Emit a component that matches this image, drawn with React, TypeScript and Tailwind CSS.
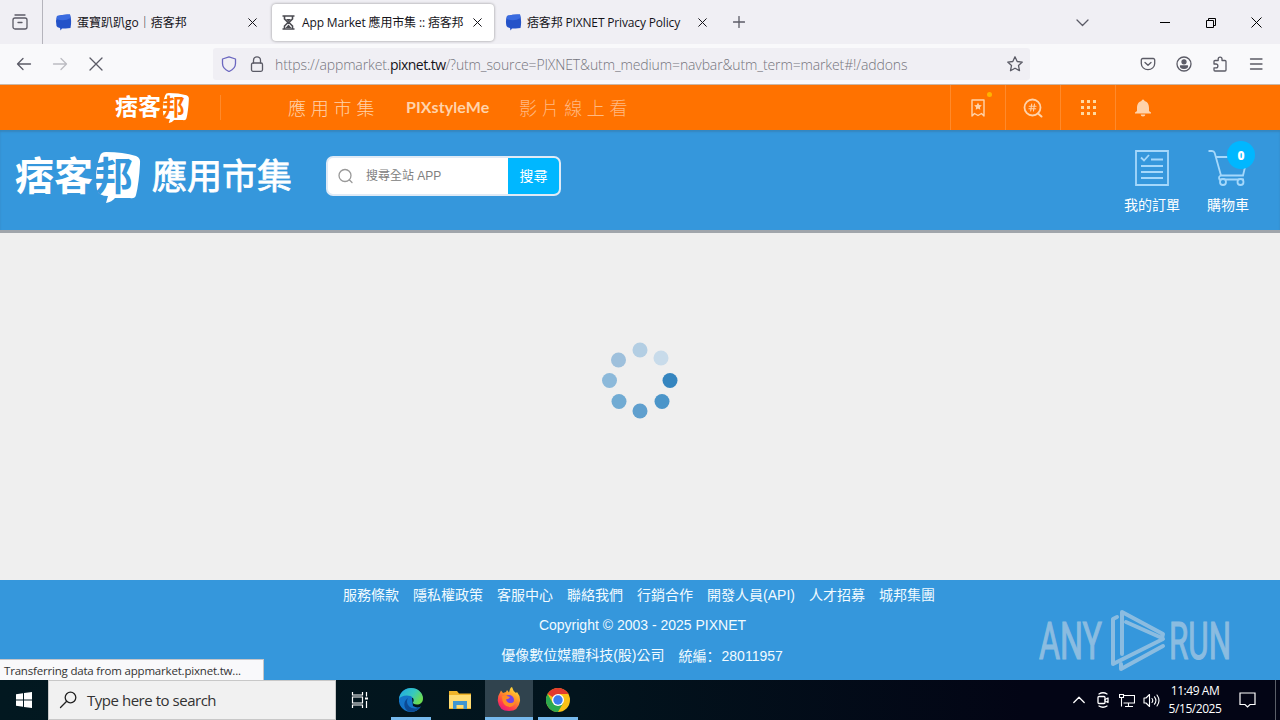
import React from "react";

const uiFont = "font-['Open_Sans','Noto_Sans_CJK_TC',sans-serif]";
const pageFont = "font-['Liberation_Sans','Noto_Sans_CJK_TC',sans-serif]";

interface IconProps {
  size?: number;
  box?: string;
  className?: string;
  children: React.ReactNode;
}

const Icon: React.FC<IconProps> = ({
  size = 16,
  box = "0 0 16 16",
  className = "",
  children,
}) => (
  <svg
    width={size}
    height={size}
    viewBox={box}
    fill="none"
    stroke="currentColor"
    strokeWidth={1.3}
    strokeLinecap="round"
    strokeLinejoin="round"
    className={`shrink-0 ${className}`}
  >
    {children}
  </svg>
);

const CloseIcon = ({ size = 9 }: { size?: number }) => (
  <Icon size={size} box="0 0 9 9">
    <path d="M.7.7l7.6 7.6M8.3.7L.7 8.3" strokeWidth={1} />
  </Icon>
);

const PixFavicon = () => (
  <svg width="17" height="17" viewBox="0 0 17 17" className="shrink-0">
    <path
      d="M2 2Q9 0 15 .6Q17 7 15.500 14Q10 14.500 7 14.500L5.500 16.500L5 14Q2 13.500 1.500 12Q.2 7 2 2Z"
      fill="#2452c8"
    />
    <path d="M2 2Q9 0 15 .6L15.500 4Q9 8 1.500 5Z" fill="#3a6be0" />
  </svg>
);

interface LogoProps {
  width: number;
  height: number;
  ink: string;
}

// speech bubble logo, the last character is cut out in the bar colour
const PixLogo: React.FC<LogoProps> = ({ width, height, ink }) => (
  <svg
    width={width}
    height={height}
    viewBox="0 0 127 53"
    className="shrink-0 overflow-visible"
  >
    <path
      d="M85 5Q86 1 91 1Q108 1 121 5Q126 7 125 13Q124 32 121 44Q120 48 115 47L100 47Q97 51 91 52L93 45Q84 45 82 39Q79 20 85 5Z"
      fill="#fff"
    />
    <g
      fontFamily="'Noto Sans CJK TC', sans-serif"
      fontWeight="700"
      fontSize="39"
    >
      <text x="0" y="39" fill="#fff">
        痞客
      </text>
      <text x="79" y="39" fill={ink}>
        邦
      </text>
    </g>
  </svg>
);

const TabBar = () => (
  <div
    className={`flex h-11 items-center bg-[#f0eff4] text-[12px] text-[#15141a] ${uiFont}`}
  >
    <div className="flex h-full w-[43px] items-center border-r border-[#b5b4bc] pl-3 text-[#5b5b66]">
      <Icon>
        <path d="M3 1h10" />
        <rect x="1" y="4" width="14" height="11" rx="2" />
        <path d="M6 8.500h4" />
      </Icon>
    </div>
    <div className="flex w-[229px] items-center pl-[12px] pr-[15px]">
      <PixFavicon />
      <span className="ml-[5px] flex-1 whitespace-nowrap pt-[2px]">
        蛋寶趴趴go｜痞客邦
      </span>
      <CloseIcon />
    </div>
    <div className="flex h-[37px] w-[222px] items-center rounded-[4px] bg-white pl-[10px] pr-[12px] shadow-[0_0_3px_rgba(0,0,0,0.4)]">
      <svg width="13" height="15" viewBox="0 0 13 15" className="shrink-0">
        <path
          d="M.5 1h12M.5 14h12M2.500 1v3L6 7.500L2.500 11v3M10.500 1v3L7 7.500L10.500 11v3"
          stroke="#4a4a50"
          strokeWidth="1.600"
          fill="none"
        />
        <path d="M4 4h5L6.500 7ZM3.500 13L6.500 9.500L9.500 13Z" fill="#4a4a50" />
      </svg>
      <span className="ml-[7px] flex-1 whitespace-nowrap pt-[2px] tracking-[-0.150px]">
        App Market 應用市集 :: 痞客邦
      </span>
      <CloseIcon />
    </div>
    <div className="flex w-[213px] items-center pl-[11px]">
      <PixFavicon />
      <span className="ml-[5px] flex-1 whitespace-nowrap pt-[2px] tracking-[-0.160px]">
        痞客邦 PIXNET Privacy Policy
      </span>
      <CloseIcon />
    </div>
    <div className="ml-[26px] text-[#5b5b66]">
      <Icon size={12} box="0 0 12 12">
        <path d="M6 .5v11M.5 6h11" />
      </Icon>
    </div>
    <div className="ml-auto flex items-center pr-[18px]">
      <Icon size={13} box="0 0 13 13" className="mr-[71px] text-[#5b5b66]">
        <path d="M1 4l5.500 5.500L12 4" />
      </Icon>
      <div className="mr-[36px] h-px w-[10px] bg-black" />
      <svg
        width="11"
        height="11"
        viewBox="0 0 11 11"
        fill="none"
        stroke="#000"
        className="mr-[34px]"
      >
        <path d="M.5 3.500h7v7h-7zM2.500 3.500v-2h7v7h-2" />
      </svg>
      <svg width="11" height="11" viewBox="0 0 11 11" stroke="#000">
        <path d="M.5.5l10 10M10.500.5l-10 10" />
      </svg>
    </div>
  </div>
);

const NavBar = () => (
  <div
    className={`flex h-[41px] items-center border-b border-[#c9b8a8] bg-[#f9f9fb] text-[#5b5b66] ${uiFont}`}
  >
    <div className="flex w-[213px] pl-[6px]">
      <div className="flex w-9 justify-center">
        <Icon>
          <path d="M14.500 8H1.500M7 2.500L1.500 8L7 13.500" />
        </Icon>
      </div>
      <div className="flex w-9 justify-center text-[#bcbcc2]">
        <Icon>
          <path d="M1.500 8h13M9 2.500l5.500 5.500L9 13.500" />
        </Icon>
      </div>
      <div className="flex w-9 justify-center">
        <Icon>
          <path d="M2 2l12 12M14 2L2 14" />
        </Icon>
      </div>
    </div>
    <div className="flex h-8 w-[817px] items-center rounded-[3px] bg-[#f0eff4] pl-[2px]">
      <div className="flex w-7 justify-center text-[#6b67c0]">
        <Icon>
          <path d="M8 .8L14.500 3v4.500C14.500 11.500 11.500 14 8 15.500C4.500 14 1.500 11.500 1.500 7.500V3Z" />
        </Icon>
      </div>
      <div className="flex w-7 justify-center">
        <Icon>
          <rect x="2.500" y="7" width="11" height="8.300" rx="1.500" />
          <path d="M4.500 7V4.300a3.500 3.500 0 0 1 7 0V7" />
        </Icon>
      </div>
      <div className="ml-1 flex-1 whitespace-nowrap pt-px text-[14px] font-light tracking-[-0.120px] text-[#75757d]">
        https://appmarket.
        <span className="font-normal tracking-[-0.550px] text-[#15141a]">
          pixnet.tw
        </span>
        /?utm_source=PIXNET&amp;utm_medium=navbar&amp;utm_term=market#!/addons
      </div>
      <Icon className="mr-[7px]">
        <path d="M8 .8l2.200 4.700l5.100.6l-3.800 3.500l1 5.100L8 12.200l-4.500 2.500l1-5.100L.7 6.100l5.100-.6Z" />
      </Icon>
    </div>
    <div className="ml-auto flex pr-[6px]">
      <div className="flex w-9 justify-center">
        <Icon>
          <path d="M2.800 2.500h10.400a1.500 1.500 0 0 1 1.500 1.500v3.500a6.700 6.200 0 0 1-13.400 0V4a1.500 1.500 0 0 1 1.500-1.500ZM5 6.500l3 2.800l3-2.800" />
        </Icon>
      </div>
      <div className="flex w-9 justify-center">
        <Icon>
          <circle cx="8" cy="8" r="7" />
          <circle cx="8" cy="5.800" r="2" fill="currentColor" />
          <path d="M4.500 10h7a3.500 2.300 0 0 1-7 0Z" fill="currentColor" />
        </Icon>
      </div>
      <div className="flex w-9 justify-center">
        <Icon>
          <path d="M2 7V5.500a1 1 0 0 1 1-1h3.200V3a1.900 1.900 0 0 1 3.800 0v1.500h3a1 1 0 0 1 1 1V14a1 1 0 0 1-1 1H3a1 1 0 0 1-1-1v-2.200h2a1.900 1.900 0 0 0 0-3.800H2Z" />
        </Icon>
      </div>
      <div className="flex w-9 justify-center">
        <Icon>
          <path d="M2.500 3h11.500M2.500 8h11.500M2.500 13h11.500" />
        </Icon>
      </div>
    </div>
  </div>
);

const cell =
  "flex h-full w-[55px] items-center justify-center border-l border-[#ff8a2b]";

const OrangeBar = () => (
  <div className="flex h-[45px] items-center bg-[#ff7200] pl-[115px] pr-[110px] text-[#ffd3ab]">
    <PixLogo width={75} height={32} ink="#ff7200" />
    <div className="ml-[30px] h-[25px] w-px bg-[#ff8a2b]" />
    <div className="ml-[67px] w-[118px] whitespace-nowrap font-['Noto_Sans_CJK_TC',sans-serif] text-[18px] font-light tracking-[4.800px]">
      應用市集
    </div>
    <div className="w-[113px] whitespace-nowrap pb-px font-['Lato',sans-serif] text-[16px] font-bold tracking-[0.1px]">
      PIXstyleMe
    </div>
    <div className="whitespace-nowrap font-['Noto_Sans_CJK_TC',sans-serif] text-[18px] font-light tracking-[4.600px] text-[#ffb982]">
      影片線上看
    </div>
    <div className="ml-auto flex h-full">
      <div className={`relative ${cell}`}>
        <Icon size={20} box="0 0 20 20">
          <path
            d="M4 2h12v16l-2.500-2.500L10 17.500L6.500 15.500L4 18Z"
            strokeWidth={1.400}
          />
          <path
            d="M10 4.500l1.200 2.400l2.600.4l-1.900 1.900l.4 2.600L10 10.600l-2.300 1.200l.4-2.600L6.200 7.300l2.600-.4Z"
            fill="currentColor"
            stroke="none"
          />
        </Icon>
        <span className="absolute right-[13px] top-[7px] h-[5px] w-[5px] rounded-full bg-[#ffb400]" />
      </div>
      <div className={cell}>
        <Icon size={20} box="0 0 20 20">
          <circle cx="9.500" cy="9.500" r="8" strokeWidth={1.800} />
          <path d="M15 15.500l3.500 3" strokeWidth={2} />
          <path
            d="M8.700 6L7.700 13M11.500 6l-1 7M6.200 8.200h6.800M5.900 10.800h6.800"
            strokeWidth={1.100}
          />
        </Icon>
      </div>
      <div className={cell}>
        <div className="grid grid-cols-3 gap-[3px]">
          {[...Array(9)].map((_, i) => (
            <span key={i} className="h-[3px] w-[3px] bg-[#ffd9a0]" />
          ))}
        </div>
      </div>
      <div className={cell}>
        <Icon size={20} box="0 0 20 20">
          <path
            d="M10 1.500a1.500 1.500 0 0 1 1.500 1.500C15 4 16 7 16 10v3l2 1.500v1H2v-1L4 13v-3c0-3 1-6 4.500-7A1.500 1.500 0 0 1 10 1.500ZM7.700 16.500h4.600a2.300 2 0 0 1-4.600 0Z"
            fill="currentColor"
            stroke="none"
          />
        </Icon>
      </div>
    </div>
  </div>
);

const Header = () => (
  <div
    className={`flex h-[103px] items-start border-b-[3px] border-[#a0a5ab] bg-[#3597dc] pl-[15px] pr-[18px] shadow-[inset_0_2px_2px_#3586be] ${pageFont}`}
  >
    <div className="flex w-[311px] items-center pt-[21px]">
      <PixLogo width={127} height={53} ink="#3597dc" />
      <span className="ml-[10px] mt-[-8px] whitespace-nowrap font-['Noto_Sans_CJK_TC',sans-serif] text-[35px] leading-[48px] text-white [-webkit-text-stroke:0.8px_#fff]">
        應用市集
      </span>
    </div>
    <div className="mt-[26px] flex h-10 w-[235px] overflow-hidden rounded-[7px] border-2 border-[#dfeaf6] bg-white">
      <div className="flex flex-1 items-center pl-[10px] text-[12px] text-[#808080]">
        <Icon size={16} className="mr-[12px] text-[#999]">
          <circle cx="7" cy="7.500" r="6" />
          <path d="M11.500 12l2.500 2.500" />
        </Icon>
        搜尋全站 APP
      </div>
      <div className="flex w-[51px] items-center justify-center bg-[#00b7ff] text-[14px] text-white">
        搜尋
      </div>
    </div>
    <div className="ml-auto flex pt-5 text-[14px] leading-[20px] text-white">
      <div className="flex w-[70px] flex-col items-center">
        <svg
          width="34"
          height="36"
          viewBox="0 0 34 36"
          fill="none"
          stroke="#a5d8fb"
          strokeWidth="1.800"
        >
          <path d="M1 1h32v34H1zM16 9.500h12M6 16h22M6 22h22M6 28h22" />
          <path d="M6 7.500l3 3l5-5.500" />
        </svg>
        <span className="mt-[9px]">我的訂單</span>
      </div>
      <div className="relative ml-[7px] flex w-[68px] flex-col items-center">
        <svg
          width="40"
          height="36"
          viewBox="0 0 40 36"
          fill="none"
          stroke="#a5d8fb"
          strokeWidth="1.800"
        >
          <path d="M.5 1h3.500q2 0 2.700 2L13 25.500h22L38 13M8 7h17M13 25.500q-3 1-1.500 4H36" />
          <circle cx="15" cy="32" r="3" fill="#3597dc" />
          <circle cx="32.500" cy="32" r="3" fill="#3597dc" />
        </svg>
        <span className="mt-[9px]">購物車</span>
        <span className="absolute right-[7px] top-[-9px] flex h-7 w-7 items-center justify-center rounded-full bg-[#00b7ff] pt-[2px] font-['Open_Sans',sans-serif] text-[12px] font-extrabold">
          0
        </span>
      </div>
    </div>
  </div>
);

const dots = [
  { x: 38, y: 8, c: "#b3cee3" },
  { x: 59, y: 16, c: "#c8dbea" },
  { x: 68, y: 38.5, c: "#3585bf" },
  { x: 60, y: 59.5, c: "#4b95c9" },
  { x: 38, y: 69, c: "#5f9fce" },
  { x: 17, y: 59.5, c: "#71abd3" },
  { x: 7.5, y: 38.5, c: "#8cb9da" },
  { x: 16.5, y: 18, c: "#9ec0dc" },
];

const Spinner = () => (
  <svg width="76" height="78" viewBox="0 0 76 78">
    {dots.map((d, i) => (
      <circle key={i} cx={d.x} cy={d.y} r="7.500" fill={d.c} />
    ))}
  </svg>
);

const links = [
  "服務條款",
  "隱私權政策",
  "客服中心",
  "聯絡我們",
  "行銷合作",
  "開發人員(API)",
  "人才招募",
  "城邦集團",
];

const Footer = () => (
  <div
    className={`flex h-[100px] flex-col items-center bg-[#3597dc] text-[14px] leading-[30px] text-[#f2fbff] ${pageFont}`}
  >
    <div className="flex gap-[14px] whitespace-nowrap pr-[2px]">
      {links.map((link) => (
        <span key={link}>{link}</span>
      ))}
    </div>
    <div className="pl-[5px]">Copyright © 2003 - 2025 PIXNET</div>
    <div className="flex gap-[14px] pl-[4px]">
      <span>優像數位媒體科技(股)公司</span>
      <span>
        統編
        <span className="mr-px font-['Noto_Sans_CJK_SC',sans-serif]" lang="zh-CN">
          ：
        </span>
        28011957
      </span>
    </div>
  </div>
);

const Watermark = () => (
  <svg
    width="196"
    height="64"
    viewBox="0 0 196 64"
    className="absolute bottom-[8px] right-[47px] overflow-visible opacity-60"
    fontFamily="Roboto, sans-serif"
    fontSize="52"
    fontWeight="400"
    fill="#c5d6e4"
  >
    <g stroke="#c5d6e4" strokeWidth="1.200">
      <text x="2" y="51" textLength="63" lengthAdjust="spacingAndGlyphs">
        ANY
      </text>
      <text x="132" y="51" textLength="62" lengthAdjust="spacingAndGlyphs">
        RUN
      </text>
    </g>
    <g
      fill="none"
      stroke="#c5d6e4"
      strokeWidth="4"
      strokeLinejoin="round"
      strokeLinecap="round"
    >
      <path d="M80 9L76 11V56L126 31" />
      <path d="M85 46V4L126 26L125 30L89 14" />
      <path d="M84 56V61L126 38" />
    </g>
  </svg>
);

const app = "flex h-full w-12 items-center justify-center border-b-[3px]";

const Taskbar = () => (
  <div
    className={`flex h-10 bg-[linear-gradient(90deg,#021820,#02141d_45%,#030515_80%)] text-white ${uiFont}`}
  >
    <div className="flex w-12 items-center justify-center">
      <svg width="16" height="16" viewBox="0 0 16 16" fill="#fff">
        <path d="M0 2.200l7-1v6.300H0zM8 1l8-1v7.500H8zM0 8.500h7v6.300l-7-1zM8 8.500h8V16l-8-1z" />
      </svg>
    </div>
    <div className="flex w-72 items-center border border-[#c8c8c8] bg-[#f1f1f1] pl-[10px] text-[15px] tracking-[-0.470px] text-[#333]">
      <Icon size={18} box="0 0 18 18" className="mr-[10px] text-[#222]">
        <circle cx="11.500" cy="6.500" r="5.300" />
        <path d="M7.700 10.300L1.500 16.500" />
      </Icon>
      <span className="pt-px">Type here to search</span>
    </div>
    <div className="flex w-12 items-center justify-center">
      <svg
        width="18"
        height="16"
        viewBox="0 0 18 16"
        fill="none"
        stroke="#fff"
        strokeWidth="1.200"
      >
        <path d="M1.500 0v3h10V0M1.500 16v-3h10v3M1.500 5h10v6h-10zM15.500 0v4.500M15.500 9v7" />
        <path d="M14 5.500h3v2h-3z" fill="#fff" stroke="none" />
      </svg>
    </div>
    <div className="ml-[3px] flex gap-px">
      <div className="flex w-12 flex-col items-center justify-between pt-2">
        <svg width="24" height="24" viewBox="0 0 24 24">
          <defs>
            <linearGradient id="edgeTop" x1="0" y1="0" x2="1" y2="0.500">
              <stop offset="0" stopColor="#1fa6e6" />
              <stop offset="0.600" stopColor="#36c8c0" />
              <stop offset="1" stopColor="#6bdc52" />
            </linearGradient>
          </defs>
          {/* body, wave on top, dark lower curl */}
          <path
            d="M12 0A12 12 0 1 0 22 18.500Q18 20.500 14 18L13 10L24 10A12 12 0 0 0 12 0Z"
            fill="#1474c8"
          />
          <path
            d="M0 11C1 4 6 0 12 0c7 0 12 5 12 10.500c0 4-3 6-6 6c-3 0-4.500-1-4-2.200c1.300-1.500 1-4.800-2.500-6.300C7 6.500 1.500 8 0 11Z"
            fill="url(#edgeTop)"
          />
          <path
            d="M9 10c-3 5 1 11 8 10.500q3-.5 5-2.500C19 23 14 24.500 10 23.500C5 22 3 14 9 10Z"
            fill="#0c4a94"
          />
        </svg>
        <div className="h-[3px] w-10 bg-[#76b9ed]" />
      </div>
      <div className={`${app} border-transparent`}>
        <svg width="22" height="20" viewBox="0 0 22 20" className="mt-[2px]">
          <path d="M0 1h8l2 2.500h12V19H0z" fill="#f0b429" />
          <path d="M0 5h22v13H0z" fill="#ffdc73" />
          <path d="M4 11h14v8h-3.500v-4h-7v4H4z" fill="#3f96d2" />
        </svg>
      </div>
      <div className={`${app} border-[#76b9ed] bg-[#30434e]`}>
        <svg width="24" height="25" viewBox="0 0 24 25" className="mt-[2px]">
          <defs>
            <linearGradient id="fox" x1="0.800" y1="0" x2="0.200" y2="1">
              <stop offset="0" stopColor="#ffe53d" />
              <stop offset="0.400" stopColor="#ff9428" />
              <stop offset="0.750" stopColor="#ff3b4e" />
              <stop offset="1" stopColor="#e31587" />
            </linearGradient>
          </defs>
          <path
            d="M3 5.500L4 3.500L6 6L9 5L10 3L12 5.500L13 2Q14 0 15 0Q16 4 19 6L20 5Q23.500 9 23 14Q21.500 24 12 24Q2 24 .8 14Q.5 9 3 5.500Z"
            fill="url(#fox)"
          />
          <circle cx="12" cy="13" r="5" fill="#7543e5" />
          <path
            d="M5 9q4-1 5 0l3 1q-1 2-4 2.500q1 4 5 3.500q3 0 4-3q1 6-5 7q-8 0-8-11Z"
            fill="#ff8a25"
          />
        </svg>
      </div>
      <div className="flex w-12 flex-col items-center justify-between pt-2">
        <svg width="24" height="24" viewBox="0 0 24 24">
          <circle cx="12" cy="12" r="12" fill="#fbc116" />
          <path d="M12 12L1.600 6A12 12 0 0 1 22.400 6H12Z" fill="#e33b2e" />
          <path d="M1.600 6A12 12 0 0 0 12 24L17.200 15H6.800Z" fill="#2da94f" />
          <circle cx="12" cy="12" r="6" fill="#fff" />
          <circle cx="12" cy="12" r="4.700" fill="#3b7ded" />
        </svg>
        <div className="h-[3px] w-10 bg-[#76b9ed]" />
      </div>
    </div>
    <div className="ml-auto flex items-center">
      <div className="flex w-6 justify-center">
        <Icon size={12} box="0 0 12 12">
          <path d="M.8 8.500L6 3.300l5.200 5.200" />
        </Icon>
      </div>
      <div className="flex w-6 justify-center">
        <Icon>
          <path d="M4 2q4-2.500 8 0M4 14q4 2.500 8 0" />
          <rect x="3" y="4.500" width="7" height="7" rx="1" />
          <path d="M10 7.500l3-1.500v4.500l-3-1.500" />
        </Icon>
      </div>
      <div className="flex w-6 justify-center">
        <svg
          width="16"
          height="16"
          viewBox="0 0 16 16"
          fill="none"
          stroke="#fff"
          strokeWidth="1.100"
        >
          <path d="M5 3.500h10.500v7.500H4.500M9.500 11v3M6 14.500h8M.5 2.500h4v3h-4zM2.500 5.500v9" />
        </svg>
      </div>
      <div className="flex w-6 justify-center">
        <Icon size={17} box="0 0 17 17">
          <path
            d="M1 6h2l3.500-3.500v12L3 11H1ZM9 6.500q1.500 2 0 4M11.500 4.800q2.800 3.700 0 7.400M14 3q4 5.500 0 11"
            strokeWidth={1.100}
          />
        </Icon>
      </div>
      <div className="w-16 text-center text-[12px] leading-[18px] tracking-[-0.450px]">
        <div>11:49 AM</div>
        <div>5/15/2025</div>
      </div>
      <div className="flex w-10 justify-center">
        <svg
          width="17"
          height="16"
          viewBox="0 0 17 16"
          fill="none"
          stroke="#fff"
          strokeWidth="1.200"
        >
          <path d="M1 1h15v11.500h-5L8.500 15L6 12.500H1Z" />
        </svg>
      </div>
      <div className="ml-2 mr-1 h-10 w-px bg-[#5b5f68]" />
    </div>
  </div>
);

const App = () => {
  return (
    <div className="flex h-[720px] w-[1280px] flex-col overflow-hidden">
      <TabBar />
      <NavBar />
      <div className="relative flex flex-1 flex-col">
        <OrangeBar />
        <Header />
        <div className="flex flex-1 justify-center bg-[#efefef] pt-[109px]">
          <Spinner />
        </div>
        <Footer />
        <Watermark />
        <div
          className={`absolute bottom-0 left-0 flex h-[21px] w-[264px] items-center whitespace-nowrap border-r border-t border-[#c5c5c8] bg-[#f9f9fb] pl-1 pt-[2px] text-[11.500px] tracking-[-0.190px] text-[#333] ${uiFont}`}
        >
          Transferring data from appmarket.pixnet.tw...
        </div>
      </div>
      <Taskbar />
    </div>
  );
};

export default App;
